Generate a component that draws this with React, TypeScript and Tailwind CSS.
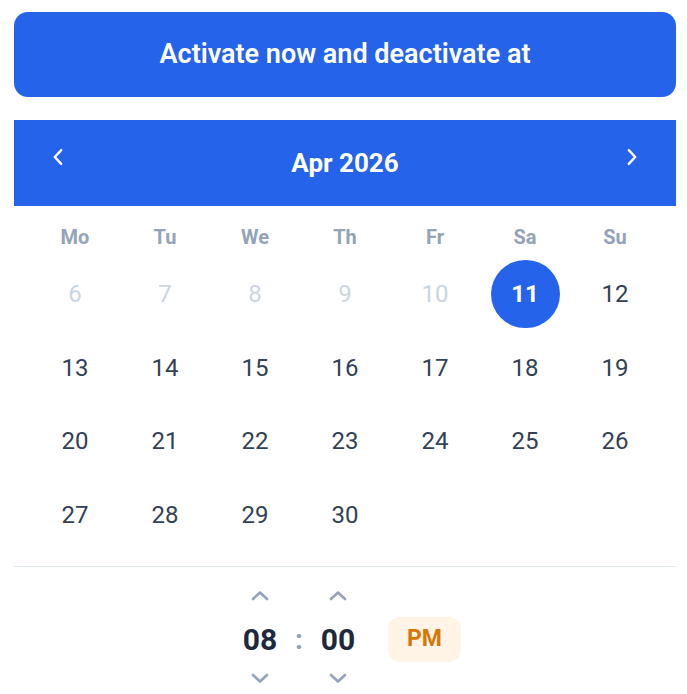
import React from "react";

const Chevron = ({ dir, className }: { dir: "up" | "down" | "left" | "right"; className?: string }) => {
  const d =
    dir === "up"
      ? "M3 12 L10 5.5 L17 12"
      : dir === "down"
      ? "M3 6 L10 12.5 L17 6"
      : dir === "left"
      ? "M10 2 L3 9.5 L10 17"
      : "M3 2 L10 9.5 L3 17";
  const vb = dir === "up" || dir === "down" ? "0 0 20 18" : "0 0 13 19";
  return (
    <svg viewBox={vb} className={className} fill="none" stroke="currentColor" strokeWidth={2.6} strokeLinecap="round" strokeLinejoin="round">
      <path d={d} />
    </svg>
  );
};

export default function App() {
  const weekdays = ["Mo", "Tu", "We", "Th", "Fr", "Sa", "Su"];
  const days: { n: number | null; state: "past" | "sel" | "norm" | "empty" }[] = [];
  [6, 7, 8, 9, 10].forEach((n) => days.push({ n, state: "past" }));
  days.push({ n: 11, state: "sel" });
  for (let i = 12; i <= 30; i++) days.push({ n: i, state: "norm" });

  return (
    <div className="bg-white pl-[14px] pr-[11px] pt-[12px] h-screen overflow-hidden" style={{ fontFamily: "Roboto, 'Liberation Sans', sans-serif" }}>
      <div className="h-[85px] rounded-[14px] bg-[#2563eb] flex items-center justify-center text-white text-[27px] font-semibold">
        Activate now and deactivate at
      </div>

      <div className="mt-[23px] h-[86px] bg-[#2563eb] flex items-center justify-between px-[25px] text-white">
        <button className="w-[38px] h-[38px] flex items-center justify-center -mt-[12px]">
          <Chevron dir="left" className="w-[12px] h-[18px]" />
        </button>
        <div className="text-[26px] font-bold">Apr 2026</div>
        <button className="w-[38px] h-[38px] flex items-center justify-center -mt-[12px]">
          <Chevron dir="right" className="w-[12px] h-[18px]" />
        </button>
      </div>

      <div className="px-[16px]">
        <div className="grid grid-cols-7 pt-[20px] h-[42px]">
          {weekdays.map((w) => (
            <div key={w} className="text-center text-[20px] leading-[22px] font-bold text-[#94a3b8]">
              {w}
            </div>
          ))}
        </div>
        <div className="grid grid-cols-7 mt-[12px] gap-y-[5.5px]">
          {days.map((d, i) => (
            <div key={i} className="h-[68px] flex items-center justify-center">
              {d.state === "sel" ? (
                <div className="w-[69px] h-[68px] rounded-full bg-[#2563eb] text-white font-bold text-[24px] flex items-center justify-center">
                  {d.n}
                </div>
              ) : (
                <span className={`text-[24px] ${d.state === "past" ? "text-[#cbd5e1]" : "text-[#334155]"}`}>{d.n}</span>
              )}
            </div>
          ))}
        </div>
      </div>

      <div className="mt-[17px] border-t border-[#e2e8f0]" />

      <div className="flex justify-center items-center pl-[7px] pt-[20px]">
        <div className="w-[48px] flex flex-col items-center">
          <Chevron dir="up" className="w-[20px] h-[18px] text-[#94a3b8]" />
          <div className="mt-[17px] h-[36px] leading-[36px] text-[30px] font-bold text-[#1e293b]">08</div>
          <Chevron dir="down" className="w-[20px] h-[18px] mt-[11px] text-[#94a3b8]" />
        </div>
        <div className="w-[30px] text-center text-[28px] font-bold text-[#94a3b8] leading-[36px] mt-[6px]">:</div>
        <div className="w-[48px] flex flex-col items-center">
          <Chevron dir="up" className="w-[20px] h-[18px] text-[#94a3b8]" />
          <div className="mt-[17px] h-[36px] leading-[36px] text-[30px] font-bold text-[#1e293b]">00</div>
          <Chevron dir="down" className="w-[20px] h-[18px] mt-[11px] text-[#94a3b8]" />
        </div>
        <div className="ml-[26px] mt-[6px] w-[73px] h-[45px] rounded-[12px] bg-[#fff4e5] flex items-center justify-center text-[#d97706] text-[23px] font-bold">
          PM
        </div>
      </div>
    </div>
  );
}
